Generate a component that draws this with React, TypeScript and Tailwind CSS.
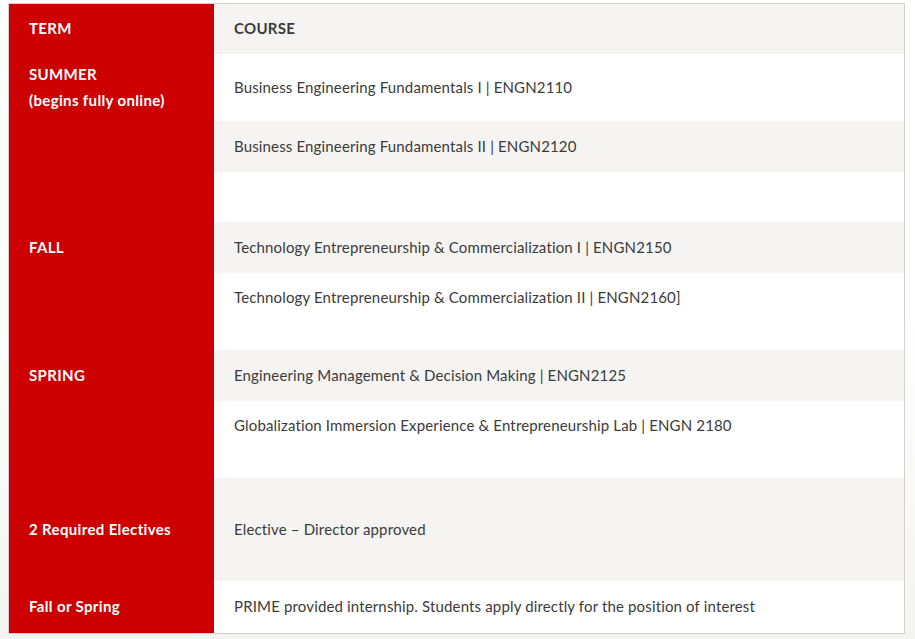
import React from 'react';

type Row = {
  term?: string[];
  course?: string;
  h: string;
  gray: boolean;
  top?: boolean;
};

// rows of the program table, heights taken from the page
const rows: Row[] = [
  { term: ['SUMMER', '(begins fully online)'], course: 'Business Engineering Fundamentals I | ENGN2110', h: 'h-[67px]', gray: false },
  { course: 'Business Engineering Fundamentals II | ENGN2120', h: 'h-[51px]', gray: true },
  { h: 'h-[50px]', gray: false },
  { term: ['FALL'], course: 'Technology Entrepreneurship & Commercialization I | ENGN2150', h: 'h-[51px]', gray: true },
  { course: 'Technology Entrepreneurship & Commercialization II | ENGN2160]', h: 'h-[77px]', gray: false, top: true },
  { term: ['SPRING'], course: 'Engineering Management & Decision Making | ENGN2125', h: 'h-[51px]', gray: true },
  { course: 'Globalization Immersion Experience & Entrepreneurship Lab | ENGN 2180', h: 'h-[77px]', gray: false, top: true },
  { term: ['2 Required Electives'], course: 'Elective – Director approved', h: 'h-[103px]', gray: true },
  { term: ['Fall or Spring'], course: 'PRIME provided internship. Students apply directly for the position of interest', h: 'h-[52px]', gray: false },
];

const App: React.FC = () => {
  return (
    <div className="w-[915px] h-[639px] bg-gradient-to-b from-white via-white to-[#f4f4f3] pl-2 pt-[3px] font-['Lato','Liberation_Sans',sans-serif]">
      <div className="w-[897px] border border-[#d4d2cf] bg-white">
        {/* header */}
        <div className="flex h-[50px]">
          <div className="w-[205px] shrink-0 bg-[#cc0000] px-5 pb-[2px] flex items-center text-white font-bold text-[15px] tracking-[0.3px]">
            TERM
          </div>
          <div className="flex-1 bg-[#f5f4f2] px-5 pb-[2px] flex items-center text-[#3b3b3b] font-bold text-[15px] tracking-[0.3px]">
            COURSE
          </div>
        </div>

        {rows.map((r, i) => (
          <div key={i} className={`flex ${r.h}`}>
            <div className="w-[205px] shrink-0 bg-[#cc0000] px-5 pb-[2px] flex flex-col justify-center text-white font-bold text-[15px] leading-[26px] tracking-[0.35px]">
              {r.term?.map((t) => <span key={t}>{t}</span>)}
            </div>
            <div
              className={`flex-1 px-5 flex text-[#3b3b3b] text-[15px] leading-[26px] tracking-[0.15px] ${
                r.gray ? 'bg-[#f5f4f2]' : 'bg-white'
              } ${r.top ? 'items-start pt-[11px]' : 'items-center pb-[2px]'}`}
            >
              {r.course}
            </div>
          </div>
        ))}
      </div>
    </div>
  );
};

export default App;
